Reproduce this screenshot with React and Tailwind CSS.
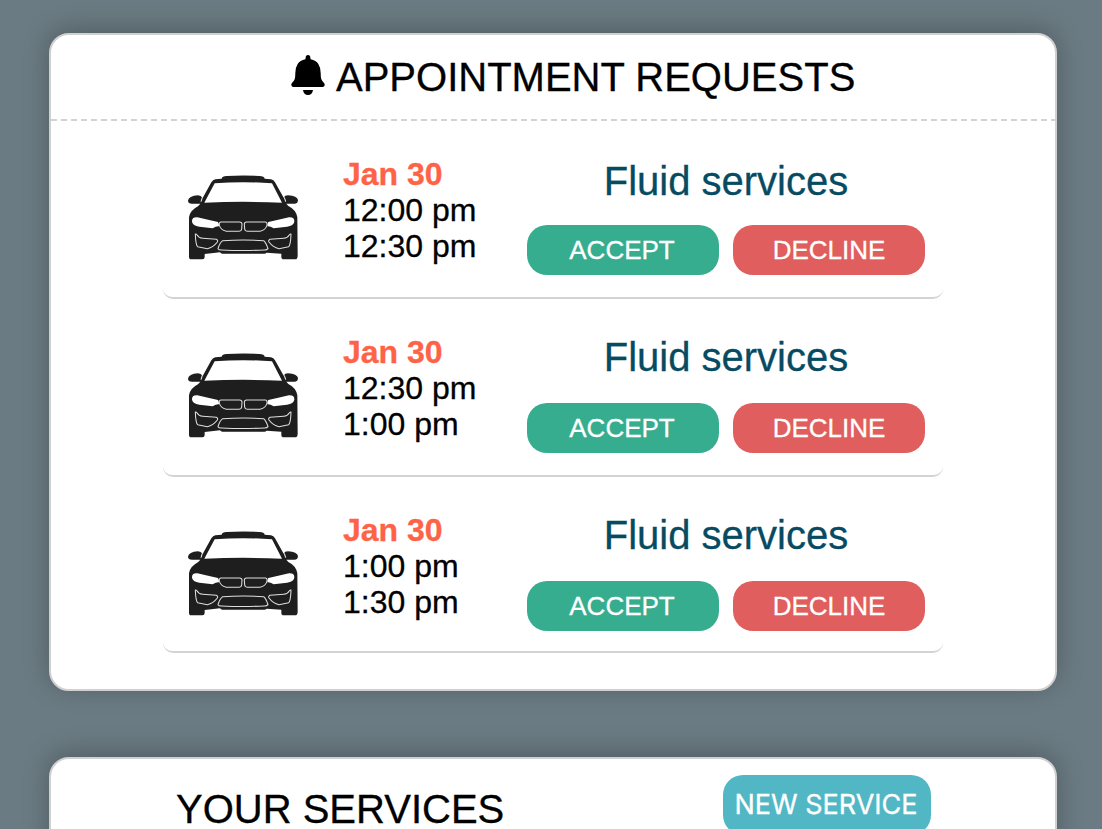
import React from "react";

const requests = [
  { date: "Jan 30", start: "12:00 pm", end: "12:30 pm", service: "Fluid services", row: "h-[178px]", title: "pt-[37px]", actions: "mt-[21px]" },
  { date: "Jan 30", start: "12:30 pm", end: "1:00 pm", service: "Fluid services", row: "h-[178px]", title: "pt-[35px]", actions: "mt-[23px]" },
  { date: "Jan 30", start: "1:00 pm", end: "1:30 pm", service: "Fluid services", row: "h-[176px]", title: "pt-[35px]", actions: "mt-[23px]" },
];

function BellIcon() {
  return (
    <svg className="h-10 w-[35px] shrink-0" viewBox="33 45 105 120" fill="currentColor" aria-hidden="true">
      <path d="M84 45Q91 45 91 53L92 58Q108 61 115 72Q122 83 122 98Q122 113 124 118Q126 123 132 129Q135 132 134 136Q133 141 128 141L40 141Q35 141 34 136Q33 132 36 129Q42 123 44 118Q46 113 46 98Q46 83 53 72Q60 61 76 58L77 53Q77 45 84 45Z M69 150L99 150Q97 165 84 165Q71 165 69 150Z" />
    </svg>
  );
}

function CarIcon() {
  return (
    <svg className="h-[86px] w-[112px] shrink-0" viewBox="51 43 336 258" aria-hidden="true">
      <g fill="#1e1e1e">
        <path d="M155 54 Q156 47 170 46 Q220 43 268 46 Q283 47 284 54 L303 56 Q311 57 315 65 L341 111 Q344 104 354 104 Q382 106 384 118 Q384 129 373 129 L349 129 L355 136 Q378 147 382 170 L383 285 Q383 296 375 296 L342 296 Q334 296 334 288 L334 279 L290 276 Q287 280 280 279 L159 279 Q153 280 150 275 L104 280 L104 289 Q104 296 97 296 L64 296 Q57 296 57 288 L57 170 Q60 149 84 137 L91 129 L66 129 Q54 129 54 120 Q56 106 84 104 Q93 104 98 112 L124 65 Q129 57 136 56 Z" />
      </g>
      <path d="M134 68 Q220 61 306 68 L336 126 Q220 121 103 126 Z" fill="#fff" />
      <path d="M97 110 L93 123 M343 110 L347 123" stroke="#fff" strokeWidth="3" fill="none" />
      <g fill="#fff">
        <path d="M66 183 Q65 169 82 170 Q111 177 144 184 Q148 190 147 197 Q139 196 128 203 L88 198 Q68 195 66 183 Z" />
        <path d="M373 183 Q374 169 357 170 Q328 177 295 184 Q291 190 292 197 Q300 196 311 203 L351 198 Q371 195 373 183 Z" />
      </g>
      <g fill="#1e1e1e" stroke="#dedede" strokeWidth="3.2" strokeLinejoin="round">
        <path d="M152 184 L209 184 Q216 184 216 191 L215 205 Q214 212 206 212 L169 212 Q151 208 148 193 Q147 185 152 184 Z" />
        <path d="M287 184 L230 184 Q223 184 223 191 L224 205 Q225 212 233 212 L270 212 Q288 208 291 193 Q292 185 287 184 Z" />
        <path d="M158 240 Q220 236 281 240 Q288 246 294 264 Q291 268 284 268 Q220 271 154 268 Q146 268 144 264 Q149 247 158 240 Z" />
        <path d="M76 220 Q80 219 82 224 Q86 232 98 233 L139 236 Q145 239 142 244 Q130 260 112 264 L83 258 Q77 253 76 220 Z" />
        <path d="M363 220 Q359 219 357 224 Q353 232 341 233 L300 236 Q294 239 297 244 Q309 260 327 264 L356 258 Q362 253 363 220 Z" />
      </g>
    </svg>
  );
}

function RequestRow({ item }) {
  return (
    <li className={`flex w-[780px] rounded-[10px] border-b-2 border-[#d3d3d3] ${item.row}`}>
      <div className="w-[180px] shrink-0 pt-[54px] pl-6">
        <CarIcon />
      </div>
      <div className="w-[184px] shrink-0 pt-[35px] text-[32px] leading-9 whitespace-nowrap">
        <div className="font-bold text-[#ff6347]">{item.date}</div>
        <div>{item.start}</div>
        <div>{item.end}</div>
      </div>
      <div className="w-[398px] shrink-0">
        <h2 className={`text-center text-[40px] leading-[46px] text-[#064b62] ${item.title}`}>{item.service}</h2>
        <div className={`flex gap-3.5 text-[26px] leading-[50px] text-white ${item.actions}`}>
          <button className="h-[50px] w-48 rounded-[20px] bg-[#37ad90] pr-0.5">ACCEPT</button>
          <button className="h-[50px] w-48 rounded-[20px] bg-[#e05e5e]">DECLINE</button>
        </div>
      </div>
    </li>
  );
}

const card = "w-[1008px] shrink-0 rounded-[20px] border-2 border-[#d0d0d0] bg-white shadow-[0_-4px_26px_rgba(0,0,0,0.26)]";

export default function App() {
  return (
    <main className="flex h-[829px] w-[1102px] flex-col gap-[66px] overflow-hidden bg-[#6b7b83] pt-[33px] pl-[49px] font-[family-name:'Liberation_Sans',Arial,sans-serif] text-black [-webkit-text-stroke:0.3px_currentColor]">
      <section className={`h-[658px] ${card}`}>
        <header className="flex h-[84px] items-start pt-5 pl-[240px]">
          <BellIcon />
          <h1 className="-mt-px pl-[10px] text-[40px] leading-[46px] whitespace-nowrap">APPOINTMENT REQUESTS</h1>
        </header>
        <svg className="block h-0.5 w-full" aria-hidden="true">
          <path d="M0 1H1004" stroke="#d3d3d3" strokeWidth="2" strokeDasharray="6 4" />
        </svg>
        <ul className="flex flex-col items-center">
          {requests.map((item, i) => (
            <RequestRow key={i} item={item} />
          ))}
        </ul>
      </section>
      <section className={`h-[300px] ${card}`}>
        <header className="flex items-start pt-4 pl-[125px]">
          <h1 className="w-[547px] pt-[11px] text-[40px] leading-[46px] whitespace-nowrap">YOUR SERVICES</h1>
          <button className="h-[60px] w-52 rounded-[20px] bg-[#52b7c4] pr-0.5 font-[family-name:Inter,sans-serif] text-[27px] leading-[60px] whitespace-nowrap text-white">NEW SERVICE</button>
        </header>
      </section>
    </main>
  );
}
